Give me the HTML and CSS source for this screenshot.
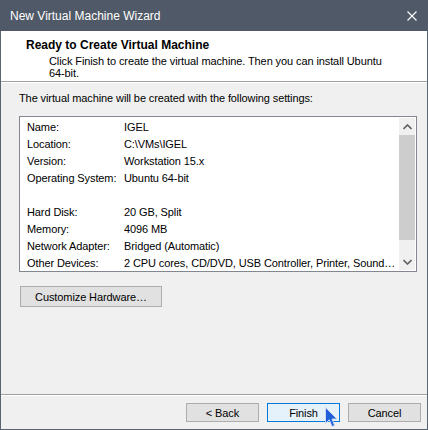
FILE: index.html
```html
<!DOCTYPE html>
<html lang="en">
<head>
  <meta charset="UTF-8" />
  <title>New Virtual Machine Wizard</title>
  <link rel="stylesheet" href="styles.css">
</head>
<body>

<div class="window">
  <div class="titlebar">
    <span class="title">New Virtual Machine Wizard</span>
    <svg class="close" width="10" height="10" viewBox="0 0 10 10">
      <path d="M0.5 0.5 L9.5 9.5 M9.5 0.5 L0.5 9.5" stroke="#ffffff" stroke-width="1.1" fill="none"/>
    </svg>
  </div>

  <!-- Header -->
  <div class="header">
    <h1>Ready to Create Virtual Machine</h1>
    <p>Click Finish to create the virtual machine. Then you can install Ubuntu<br>64-bit.</p>
  </div>

  <!-- Summary -->
  <div class="content">
    <p class="intro">The virtual machine will be created with the following settings:</p>

    <div class="listbox">
      <div class="rows">
        <div class="row"><span class="key">Name:</span><span>IGEL</span></div>
        <div class="row"><span class="key">Location:</span><span>C:\VMs\IGEL</span></div>
        <div class="row"><span class="key">Version:</span><span>Workstation 15.x</span></div>
        <div class="row"><span class="key">Operating System:</span><span>Ubuntu 64-bit</span></div>
        <div class="row"></div>
        <div class="row"><span class="key">Hard Disk:</span><span>20 GB, Split</span></div>
        <div class="row"><span class="key">Memory:</span><span>4096 MB</span></div>
        <div class="row"><span class="key">Network Adapter:</span><span>Bridged (Automatic)</span></div>
        <div class="row"><span class="key">Other Devices:</span><span>2 CPU cores, CD/DVD, USB Controller, Printer, Sound…</span></div>
      </div>
      <div class="scrollbar">
        <div class="arrow">
          <svg width="9" height="6" viewBox="0 0 9 6"><path d="M0.5 5 L4.5 1 L8.5 5" stroke="#606060" stroke-width="1.6" fill="none"/></svg>
        </div>
        <div class="thumb"></div>
        <div class="track"></div>
        <div class="arrow">
          <svg width="9" height="6" viewBox="0 0 9 6"><path d="M0.5 1 L4.5 5 L8.5 1" stroke="#606060" stroke-width="1.6" fill="none"/></svg>
        </div>
      </div>
    </div>

    <button class="btn wide">Customize Hardware…</button>
  </div>

  <!-- Footer -->
  <div class="footer">
    <button class="btn">&lt; Back</button>
    <button class="btn default">Finish</button>
    <button class="btn">Cancel</button>
    <svg class="cursor" width="13" height="21" viewBox="0 0 13 21">
      <path d="M0.5 0.5 L0.5 16.5 L4.3 12.8 L7 19.5 L9.6 18.4 L7 12 L12 12 Z" fill="#1f5fd8" stroke="#c9d8f0" stroke-width="1"/>
    </svg>
  </div>
</div>

</body>
</html>
```

FILE: styles.css
```css
body {
  margin: 0;
  padding: 0;
  font-family: 'Liberation Sans', Arial, sans-serif;
  font-size: 11px;
  letter-spacing: -0.1px;
  color: #000000;
  background: #f0f0f0;
}

.window {
  width: 428px;
  height: 430px;
  box-sizing: border-box;
  border: 1px solid #5b6571;
  border-top: none;
  background: #f0f0f0;
  display: flex;
  flex-direction: column;
}

.titlebar {
  height: 31px;
  margin: 0 -1px;
  background: #4f5967;
  color: #ffffff;
  display: flex;
  align-items: center;
  justify-content: space-between;
  padding: 1px 11px 0 10px;
  box-sizing: border-box;
  font-size: 12px;
  letter-spacing: 0;
}

.close {
  margin-top: 0;
}

.header {
  height: 51px;
  background: #ffffff;
  border-bottom: 1px solid #a0a0a0;
  box-shadow: 0 1px 0 #ffffff;
  padding: 7px 0 0 25px;
  box-sizing: border-box;
}

h1 {
  margin: 0;
  font-size: 12px;
  letter-spacing: 0;
  line-height: 15px;
  font-weight: bold;
}

.header p {
  margin: 2px 0 0 23px;
  line-height: 12px;
}

.content {
  flex: 1;
  padding: 9px 0 0 18px;
}

.intro {
  margin: 0;
  line-height: 14px;
}

.listbox {
  margin-top: 11px;
  width: 398px;
  height: 156px;
  box-sizing: border-box;
  border: 1px solid #828790;
  background: #ffffff;
  display: flex;
  overflow: hidden;
}

.rows {
  flex: 1;
  min-width: 0;
  padding: 2px 6px 0 7px;
  white-space: nowrap;
  overflow: hidden;
}

.row {
  height: 17px;
  line-height: 17px;
  display: flex;
}

.key {
  width: 97px;
  flex-shrink: 0;
}

.scrollbar {
  width: 16px;
  flex-shrink: 0;
  margin: 1px 1px 1px 0;
  background: #f0f0f0;
  display: flex;
  flex-direction: column;
}

.arrow {
  height: 17px;
  display: flex;
  align-items: center;
  justify-content: center;
}

.thumb {
  height: 105px;
  background: #cdcdcd;
}

.track {
  flex: 1;
}

.btn {
  font-family: inherit;
  font-size: 11px;
  letter-spacing: -0.1px;
  color: #000000;
  background: #e1e1e1;
  border: 1px solid #adadad;
  padding: 0;
  height: 19px;
  width: 73px;
  box-sizing: border-box;
}

.btn.wide {
  margin: 14px 0 0 1px;
  width: 142px;
  height: 21px;
  display: block;
}

.btn.default {
  background: #e5f1fb;
  border-color: #0078d7;
}

.footer {
  position: relative;
  height: 35px;
  border-top: 1px solid #a0a0a0;
  box-shadow: inset 0 1px 0 #ffffff;
  box-sizing: border-box;
  display: flex;
  justify-content: flex-end;
  gap: 8px;
  padding: 8px 6px 0 0;
}

.cursor {
  position: absolute;
  left: 324px;
  top: 12px;
}
```
